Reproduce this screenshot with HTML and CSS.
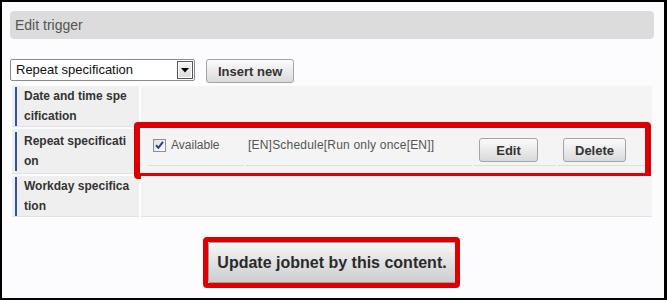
FILE: index.html
```html
<!DOCTYPE html>
<html lang="en">
<head>
<meta charset="utf-8">
<title>Edit trigger</title>
<link rel="stylesheet" href="styles.css">
</head>
<body>
<div class="frame">
  <div class="panel-title">Edit trigger</div>

  <div class="toolbar">
    <div class="select">
      <span class="select-value">Repeat specification</span>
      <span class="select-arrow"><svg width="8" height="5" viewBox="0 0 8 5"><path d="M0 0H8L4 4.5Z" fill="#000"/></svg></span>
    </div>
    <button class="btn btn-md">Insert new</button>
  </div>

  <div class="spec-table">
    <div class="spec-head"><div class="spec-label">Date and time specification</div></div>
    <div class="spec-body"></div>

    <div class="spec-head"><div class="spec-label">Repeat specification</div></div>
    <div class="spec-body spec-body--filled">
      <div class="entry">
        <div class="entry-cell">
          <span class="checkbox"><svg width="11" height="11" viewBox="0 0 11 11"><path d="M2 5.2L4.4 7.8L9 1.8" fill="none" stroke="#2b3f8c" stroke-width="2"/></svg></span>
          <span class="entry-text">Available</span>
        </div>
        <div class="entry-cell entry-cell--desc"><span class="entry-text entry-desc">[EN]Schedule[Run only once[EN]]</span></div>
        <div class="entry-cell"><button class="btn btn-sm">Edit</button></div>
        <div class="entry-cell"><button class="btn btn-sm">Delete</button></div>
      </div>
      <span class="highlight highlight--row"></span>
    </div>

    <div class="spec-head"><div class="spec-label">Workday specification</div></div>
    <div class="spec-body"></div>
  </div>

  <div class="actions">
    <div class="action-wrap">
      <button class="btn btn-lg">Update jobnet by this content.</button>
      <span class="highlight highlight--btn"></span>
    </div>
  </div>
</div>
</body>
</html>
```
FILE: styles.css
```css
html, body {
  margin: 0;
  padding: 0;
}

body {
  font-family: "Liberation Sans", Arial, sans-serif;
  background: #fcfcfe;
}

.frame {
  width: 667px;
  height: 300px;
  box-sizing: border-box;
  border: 2px solid #000;
  border-right-width: 3px;
  padding: 9px 10px 0 8px;
  background: #fcfcfe;
}

.panel-title {
  height: 28px;
  line-height: 28px;
  padding-left: 5px;
  background: #dcdcdc;
  border-radius: 4px;
  font-size: 14px;
  color: #555;
}

.toolbar {
  display: flex;
  align-items: flex-start;
  gap: 11px;
  margin-top: 20px;
}

.select {
  position: relative;
  width: 185px;
  height: 22px;
  box-sizing: border-box;
  border: 1px solid #8a8a8a;
  border-radius: 2px;
  background: #fff;
  display: flex;
  align-items: center;
  padding-left: 5px;
}

.select-value {
  font-size: 13px;
  color: #111;
  line-height: 20px;
}

.select-arrow {
  position: absolute;
  right: 1px;
  top: 1px;
  width: 16px;
  height: 18px;
  box-sizing: border-box;
  border: 1px solid #555;
  background: linear-gradient(#f4f4f4, #dcdcdc);
  box-shadow: inset 0 0 0 1px #fff;
  display: flex;
  align-items: center;
  justify-content: center;
}

.btn {
  font-family: "Liberation Sans", Arial, sans-serif;
  font-weight: bold;
  color: #333;
  border: 1px solid #a4a4a4;
  border-radius: 3px;
  background: linear-gradient(#fbfbfb, #dadada);
  margin: 0;
  cursor: pointer;
}

.btn-md {
  height: 24px;
  padding: 0 11px;
  font-size: 13px;
}

.btn-sm {
  height: 24px;
  min-width: 59px;
  padding: 0 11px;
  font-size: 13px;
}

.btn-lg {
  height: 41px;
  padding: 0 8px;
  font-size: 16px;
  color: #2a2a2a;
  border-color: #9c9c9c;
  border-radius: 2px;
  background: linear-gradient(#f6f6f6, #cdcdcd);
}

.spec-table {
  display: grid;
  grid-template-columns: 127px 1fr;
  gap: 2px;
  padding: 2px;
  margin-top: 1px;
}

.spec-head {
  display: flex;
  align-items: center;
  padding: 1px 8px 0 3px;
  background: #efefef;
  border-bottom: 1px solid #e2e2e2;
}

.spec-label {
  border-left: 2px solid #34549c;
  padding-left: 7px;
  font-size: 12px;
  font-weight: bold;
  line-height: 19.5px;
  color: #333;
  word-break: break-all;
}

.spec-body {
  position: relative;
  background: #f4f4f4;
  border-bottom: 1px solid #e2e2e2;
}

.spec-body--filled {
  padding: 3px 6px 7px 7px;
}

.entry {
  display: grid;
  grid-template-columns: 96px 226px 82px 88px;
  column-gap: 2px;
}

.entry-cell {
  height: 34px;
  box-sizing: border-box;
  padding: 6px 0 0 5px;
  border-bottom: 1px solid #dedede;
  display: flex;
  align-items: flex-start;
}

.entry-cell--desc {
  padding-left: 2px;
}

.entry-text {
  font-size: 12px;
  line-height: 15px;
  color: #555;
}

.entry-desc {
  letter-spacing: 0.2px;
}

.checkbox {
  width: 13px;
  height: 13px;
  box-sizing: border-box;
  margin: 1px 5px 0 0;
  border: 1px solid #8e8f8f;
  background: linear-gradient(135deg, #dcdfe6, #fdfdfd);
  display: flex;
  align-items: center;
  justify-content: center;
}

.actions {
  display: flex;
  justify-content: center;
  margin-top: 23px;
}

.action-wrap {
  position: relative;
}

.highlight {
  position: absolute;
  pointer-events: none;
  border-style: solid;
  border-color: #dc0000;
  border-radius: 4px;
}

.highlight--row {
  top: -7px;
  left: -7px;
  right: 1px;
  bottom: -6px;
  border-width: 6px;
}

.highlight--btn {
  top: -5px;
  left: -5px;
  right: -4px;
  bottom: -5px;
  border-width: 5px;
}
```
